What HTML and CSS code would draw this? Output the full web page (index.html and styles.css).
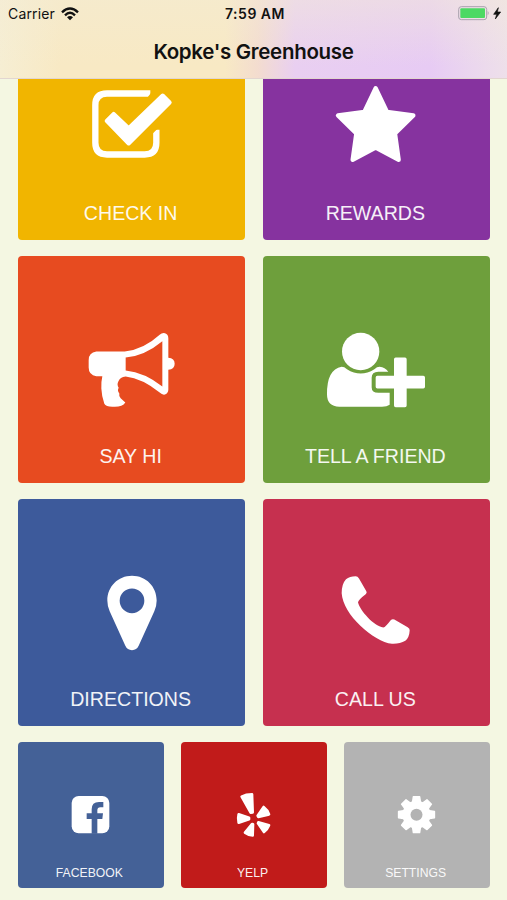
FILE: index.html
```html
<!DOCTYPE html>
<html lang="en">
<head>
<meta charset="utf-8">
<title>Kopke's Greenhouse</title>
<link rel="stylesheet" href="styles.css">
</head>
<body>
<div class="app">
  <header class="navbar">
    <div class="status">
      <div class="carrier"><span>Carrier</span>
        <svg class="wifi" viewBox="0 0 54 42"><g fill="none" stroke="#111" stroke-width="7"><path d="M3 16Q27-7 51 16M12 25Q27 10 42 25"/></g><path fill="#111" d="M18 31Q27 23 36 31L27 40Z"/></svg>
      </div>
      <span class="time">7:59 AM</span>
      <svg class="battery" viewBox="0 0 132 45"><rect x="2" y="2" width="84" height="39" rx="8" fill="none" stroke="#aaa2af" stroke-width="3"/><rect x="7" y="7" width="74" height="29" rx="3" fill="#4cd964"/><path d="M89 15Q95 21 89 28Z" fill="#aaa2af"/><path d="M121 5L107 25H116L112 39L128 18H118Z" fill="#111" stroke="#111" stroke-width="2"/></svg>
    </div>
    <h1 class="title">Kopke's Greenhouse</h1>
  </header>

  <main class="menu">
    <div class="row">
      <a class="tile yellow">
        <svg class="icon" viewBox="185 7.5 360 300"><path fill="none" stroke="#fff" stroke-width="19" d="M420 54H290Q255 54 255 89V202Q255 237 290 237H403Q438 237 438 202V163"/><path fill="#f1b500" d="M409 69L430 42H443V73H409ZM425 176L452 149V135H425Z"/><path fill="#fff" stroke="#fff" stroke-width="12" stroke-linejoin="round" d="M289 136L310 115L355 158L457 60L478 81L355 204Z"/></svg>
        <span class="label">CHECK IN</span>
      </a>
      <a class="tile purple">
        <svg class="icon" viewBox="184 7.5 360 300"><path fill="#fff" stroke="#fff" stroke-width="13" stroke-linejoin="round" d="M363 38L397 109L476 120L421 174L432 253L363 216L294 253L305 174L250 120L329 109Z"/></svg>
        <span class="label">REWARDS</span>
      </a>
    </div>
    <div class="row">
      <a class="tile orange">
        <svg class="icon" viewBox="7 32.5 360 300"><path fill="#fff" fill-rule="evenodd" d="M80 124H165Q221 119 270 74Q277 67 286 69Q296 72 296 84V143Q315 144 315 161Q315 178 296 179V238Q296 249 286 253Q278 255 270 247Q218 205 168 199Q151 201 146 214Q141 223 147 233Q142 242 149 250Q147 259 153 264L167 277Q158 291 132 290Q109 291 104 281Q96 258 95 235Q94 215 98 198H80Q57 195 57 172V150Q57 127 80 124ZM168 142V181Q225 187 278 229V93Q225 137 168 142Z"/></svg>
        <span class="label">SAY HI</span>
      </a>
      <a class="tile green">
        <svg class="icon" viewBox="49 32.5 360 300"><g fill="#fff"><circle cx="183" cy="124" r="56"/><path d="M126 170Q134 170 142 177Q183 203 224 177Q232 170 240 170Q256 172 266 185H236Q216 185 216 203V231Q216 248 236 248H270V284Q262 290 247 290H119Q82 288 82 253Q81 178 126 170Z"/><path d="M288 142H316Q321 142 321 147V197H371Q376 197 376 202V230Q376 235 371 235H321V286Q321 291 316 291H288Q283 291 283 286V235H233Q228 235 228 230V202Q228 197 233 197H283V147Q283 142 288 142Z"/></g></svg>
        <span class="label">TELL A FRIEND</span>
      </a>
    </div>
    <div class="row">
      <a class="tile blue">
        <svg class="icon" viewBox="35 11.5 360 300"><path fill="#fff" fill-rule="evenodd" d="M215 47C257 47 289 80 289 121Q289 138 282 153L235 257Q229 270 215 270Q201 270 195 257L148 153Q141 138 141 121C141 80 173 47 215 47ZM215 85A37 37 0 1 0 215 159A37 37 0 1 0 215 85Z"/></svg>
        <span class="label">DIRECTIONS</span>
      </a>
      <a class="tile red">
        <svg class="icon" viewBox="19 11.5 360 300"><path fill="#fff" d="M138 48Q144 48 148 55L170 93Q173 98 168 102Q147 118 145 126C151 151 191 196 221 202Q228 200 243 180Q248 175 254 178L294 201Q301 205 300 211Q299 232 287 242Q270 252 247 251C192 244 100 164 96 99Q96 71 109 57Q120 48 138 48Z"/></svg>
        <span class="label">CALL US</span>
      </a>
    </div>
    <div class="row small">
      <a class="tile facebook">
        <svg class="icon" viewBox="152 150 180 180"><rect x="184" y="183" width="113" height="112" rx="21" fill="#fff"/><path fill="#446197" d="M244 296V252H229V235H244V223Q244 201 266 201H279V217H270Q261 217 261 226V235H278L276 252H261V296Z"/></svg>
        <span class="label">FACEBOOK</span>
      </a>
      <a class="tile yelp">
        <svg class="icon" viewBox="146 150 180 180"><g fill="#fff" stroke="#fff" stroke-width="8" stroke-linejoin="round"><path d="M199 185Q212 178 230 178L232 232L226 233Z"/><path d="M190 238Q187 250 190 263L221 253V248Z"/><path d="M247 242L265 216Q277 225 281 238L249 246Z"/><path d="M249 262L281 271Q276 284 266 291L248 265Z"/><path d="M230 267L209 293Q218 300 232 301L233 268Z"/></g></svg>
        <span class="label">YELP</span>
      </a>
      <a class="tile gray">
        <svg class="icon" viewBox="156 150 180 180"><g fill="#fff" stroke="#fff" stroke-width="4" stroke-linejoin="round"><circle cx="244.500" cy="239" r="40"/><path id="tooth" d="M232 205L235 185H254L257 205ZM232 273L235 293H254L257 273Z"/><use href="#tooth" transform="rotate(45 244.500 239)"/><use href="#tooth" transform="rotate(90 244.500 239)"/><use href="#tooth" transform="rotate(135 244.500 239)"/></g><circle cx="244.500" cy="239" r="18" fill="#b3b3b3"/></svg>
        <span class="label">SETTINGS</span>
      </a>
    </div>
  </main>
</div>
</body>
</html>
```
FILE: styles.css
```css
* { box-sizing: border-box; }
body { margin: 0; }
.app {
  width: 507px;
  height: 900px;
  display: flex;
  flex-direction: column;
  overflow: hidden;
  background: #f4f7e2;
}
.navbar {
  flex: none;
  height: 79px;
  font-family: Inter, "Liberation Sans", sans-serif;
  color: #111;
  border-bottom: 1px solid #e2d6d0;
  background:
    linear-gradient(to bottom, rgba(243, 236, 214, .45), rgba(243, 236, 214, 0) 85%),
    linear-gradient(to right, #f6eed3 0, #f8e9c4 60px, #f8e9c4 225px, #f3dccf 258px, #e9cff1 295px, #e7cbf4 430px, #eee0ea 507px);
}
.status {
  display: grid;
  grid-template-columns: 1fr auto 1fr;
  align-items: center;
  height: 27px;
  padding: 0 5px 0 8px;
}
.carrier {
  display: flex;
  align-items: center;
  gap: 6px;
  font-size: 14px;
  letter-spacing: .15px;
}
.wifi { width: 18px; height: 14px; }
.time { font-size: 14px; font-weight: 600; letter-spacing: .5px; }
.battery { width: 44px; height: 15px; justify-self: end; }
.title {
  margin: 12px 0 0;
  font-size: 20.500px;
  line-height: 26px;
  font-weight: 600;
  letter-spacing: -.3px;
  text-align: center;
}
.menu {
  flex: none;
  height: 821px;
  display: flex;
  flex-direction: column;
  justify-content: flex-end;
  gap: 16px;
  padding: 0 17px 12.300px 18px;
  overflow: hidden;
}
.row {
  flex: none;
  display: grid;
  grid-template-columns: 1fr 1fr;
  gap: 17.400px;
  height: 227.200px;
}
.tile {
  display: flex;
  flex-direction: column;
  align-items: center;
  justify-content: space-between;
  padding: 65px 0 15px;
  border-radius: 4px;
  color: #fff;
  font-family: "Liberation Sans", Arial, sans-serif;
}
.icon { width: 120px; height: 100px; }
.label {
  margin-right: 2px;
  font-size: 19.600px;
  line-height: 24px;
  white-space: nowrap;
  opacity: .93;
}
.small { grid-template-columns: repeat(3, 1fr); height: 145.500px; }
.small .tile { padding: 42.500px 0 7px; }
.small .icon { width: 60px; height: 60px; }
.small .label { margin-right: 3px; font-size: 12.200px; line-height: 16px; }
.yellow { background: #f1b500; }
.purple { background: #86339f; }
.orange { background: #e74b20; }
.green { background: #6e9f3c; }
.blue { background: #3d5a9b; }
.red { background: #c6304f; }
.facebook { background: #446197; }
.yelp { background: #c11b1a; }
.gray { background: #b3b3b3; }
```
